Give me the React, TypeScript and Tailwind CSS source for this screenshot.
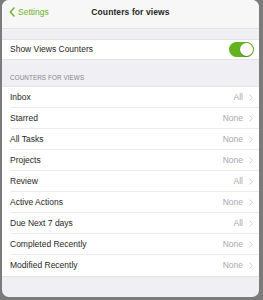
import React from 'react'

const rows: { label: string, value: string }[] = [
  { label: 'Inbox', value: 'All' },
  { label: 'Starred', value: 'None' },
  { label: 'All Tasks', value: 'None' },
  { label: 'Projects', value: 'None' },
  { label: 'Review', value: 'All' },
  { label: 'Active Actions', value: 'None' },
  { label: 'Due Next 7 days', value: 'All' },
  { label: 'Completed Recently', value: 'None' },
  { label: 'Modified Recently', value: 'None' },
]

const Chevron = ({ className }: { className?: string }) => (
  <svg width="4" height="7" viewBox="0 0 4 7" className={className}>
    <path d="M0.5 0.5 L3.3 3.5 L0.5 6.5" fill="none" stroke="currentColor" strokeWidth="0.9" />
  </svg>
)

const App = () => {
  return (
    <div className="h-[300px] w-[263px] bg-[#7b7b7b] pl-[2px] pr-[4px] pb-[3px] font-['Liberation_Sans',Arial,sans-serif]">
      <div className="h-full rounded-[7px] overflow-hidden bg-[#efeff4] flex flex-col">

        {/* nav bar */}
        <div className="h-[29px] bg-[#f7f7f7] relative flex items-center justify-center border-b border-[#e2e2e6] pb-[4px]">
          <div className="absolute left-[7px] top-[6px] flex items-center gap-[3px] text-[#6cb42a]">
            <svg width="6" height="10" viewBox="0 0 6 10">
              <path d="M5 1 L1.3 5 L5 9" fill="none" stroke="currentColor" strokeWidth="1.5" strokeLinecap="round" strokeLinejoin="round" />
            </svg>
            <span className="text-[8.5px]">Settings</span>
          </div>
          <span className="text-[8.5px] font-semibold text-[#262626] tracking-[0.1px]">Counters for views</span>
        </div>

        <div className="h-[10px]" />

        {/* toggle row */}
        <div className="h-[21px] bg-white flex items-center justify-between pl-[8px] pr-[5px] border-y border-[#e4e4e8]">
          <span className="text-[8.5px] text-[#262626]">Show Views Counters</span>
          <div className="w-[25px] h-[15px] rounded-full bg-[#64b21e] flex items-center justify-end pr-[1px]">
            <div className="w-[13px] h-[13px] rounded-full bg-white shadow-[0_1px_1px_rgba(0,0,0,0.25)]" />
          </div>
        </div>

        {/* section header */}
        <div className="h-[26px] flex items-end pl-[8px] pb-[4px]">
          <span className="text-[6.3px] text-[#86868a] tracking-[0.1px]">COUNTERS FOR VIEWS</span>
        </div>

        <div className="bg-white border-y border-[#e4e4e8]">
          {rows.map((r, i) => (
            <div key={r.label} className="pl-[8px]">
              <div className={"h-[21px] flex items-center justify-between pr-[6px] " + (i < rows.length - 1 ? 'border-b border-[#ececf0]' : '')}>
                <span className="text-[8.5px] text-[#262626]">{r.label}</span>
                <div className="flex items-center gap-[6px]">
                  <span className="text-[8.5px] text-[#a8a8ad]">{r.value}</span>
                  <Chevron className="text-[#c7c7cc]" />
                </div>
              </div>
            </div>
          ))}
        </div>

      </div>
    </div>
  )
}

export default App
